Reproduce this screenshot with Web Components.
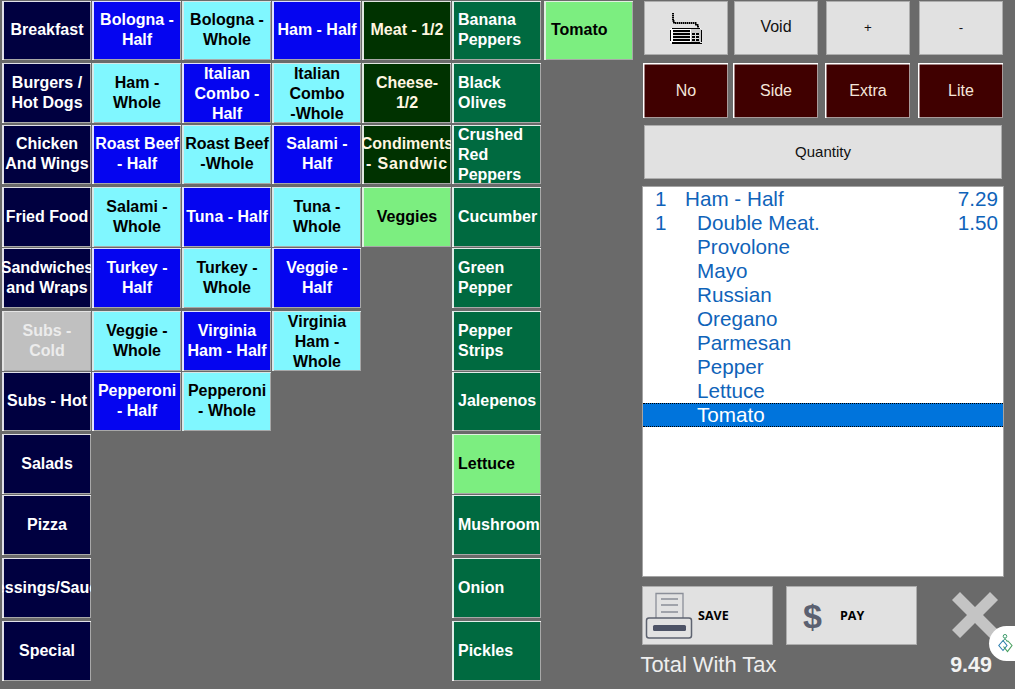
<!DOCTYPE html>
<html><head><meta charset="utf-8"><title>POS</title>
<style>
html,body{margin:0;padding:0;background:#6a6a6a;overflow:hidden}
body{font-family:"Liberation Sans",Arial,sans-serif}
</style></head><body>
<pos-app>
  <pos-menu>
    <pos-btn r="1" c="1" v="navy">Breakfast</pos-btn>
    <pos-btn r="2" c="1" v="navy">Burgers /<br>Hot Dogs</pos-btn>
    <pos-btn r="3" c="1" v="navy">Chicken<br>And Wings</pos-btn>
    <pos-btn r="4" c="1" v="navy">Fried Food</pos-btn>
    <pos-btn r="5" c="1" v="navy">Sandwiches<br>and Wraps</pos-btn>
    <pos-btn r="6" c="1" v="silver">Subs -<br>Cold</pos-btn>
    <pos-btn r="7" c="1" v="navy">Subs - Hot</pos-btn>
    <pos-btn r="8" c="1" v="navy">Salads</pos-btn>
    <pos-btn r="9" c="1" v="navy">Pizza</pos-btn>
    <pos-btn r="10" c="1" v="navy">Dressings/Sauces</pos-btn>
    <pos-btn r="11" c="1" v="navy">Special</pos-btn>

    <pos-btn r="1" c="2" v="blue">Bologna -<br>Half</pos-btn>
    <pos-btn r="2" c="2" v="cyan">Ham -<br>Whole</pos-btn>
    <pos-btn r="3" c="2" v="blue">Roast Beef<br>- Half</pos-btn>
    <pos-btn r="4" c="2" v="cyan">Salami -<br>Whole</pos-btn>
    <pos-btn r="5" c="2" v="blue">Turkey -<br>Half</pos-btn>
    <pos-btn r="6" c="2" v="cyan">Veggie -<br>Whole</pos-btn>
    <pos-btn r="7" c="2" v="blue">Pepperoni<br>- Half</pos-btn>

    <pos-btn r="1" c="3" v="cyan">Bologna -<br>Whole</pos-btn>
    <pos-btn r="2" c="3" v="blue" tall>Italian<br>Combo -<br>Half</pos-btn>
    <pos-btn r="3" c="3" v="cyan">Roast Beef<br>-Whole</pos-btn>
    <pos-btn r="4" c="3" v="blue">Tuna - Half</pos-btn>
    <pos-btn r="5" c="3" v="cyan">Turkey -<br>Whole</pos-btn>
    <pos-btn r="6" c="3" v="blue">Virginia<br>Ham - Half</pos-btn>
    <pos-btn r="7" c="3" v="cyan">Pepperoni<br>- Whole</pos-btn>

    <pos-btn r="1" c="4" v="blue">Ham - Half</pos-btn>
    <pos-btn r="2" c="4" v="cyan" tall>Italian<br>Combo<br>-Whole</pos-btn>
    <pos-btn r="3" c="4" v="blue">Salami -<br>Half</pos-btn>
    <pos-btn r="4" c="4" v="cyan">Tuna -<br>Whole</pos-btn>
    <pos-btn r="5" c="4" v="blue">Veggie -<br>Half</pos-btn>
    <pos-btn r="6" c="4" v="cyan" tall>Virginia<br>Ham -<br>Whole</pos-btn>

    <pos-btn r="1" c="5" v="forest">Meat - 1/2</pos-btn>
    <pos-btn r="2" c="5" v="forest">Cheese-<br>1/2</pos-btn>
    <pos-btn r="3" c="5" v="forest">Condiments<br><span style="letter-spacing:.8px">- Sandwic</span></pos-btn>
    <pos-btn r="4" c="5" v="lime">Veggies</pos-btn>

    <pos-btn r="1" c="6" v="green" left>Banana<br>Peppers</pos-btn>
    <pos-btn r="2" c="6" v="green" left>Black<br>Olives</pos-btn>
    <pos-btn r="3" c="6" v="green" left tall>Crushed<br>Red<br>Peppers</pos-btn>
    <pos-btn r="4" c="6" v="green" left>Cucumber</pos-btn>
    <pos-btn r="5" c="6" v="green" left>Green<br>Pepper</pos-btn>
    <pos-btn r="6" c="6" v="green" left>Pepper<br>Strips</pos-btn>
    <pos-btn r="7" c="6" v="green" left>Jalepenos</pos-btn>
    <pos-btn r="8" c="6" v="lime" left>Lettuce</pos-btn>
    <pos-btn r="9" c="6" v="green" left>Mushroom</pos-btn>
    <pos-btn r="10" c="6" v="green" left>Onion</pos-btn>
    <pos-btn r="11" c="6" v="green" left>Pickles</pos-btn>

    <pos-btn r="1" c="8" v="lime" left style="padding-left:7px">Tomato</pos-btn>
  </pos-menu>

  <order-panel>
    <tool-row style="--pad:2px">
      <tool-btn style="width:84px;--pb:0px">
        <svg width="34" height="33" viewBox="0 0 34 33" aria-hidden="true" shape-rendering="crispEdges" style="display:block">
          <path d="M4 1v8h1v2h22v2h2v3" fill="none" stroke="#777" stroke-width="2"/>
          <path d="M4 1v8h1v2h22v2h2v3" fill="none" stroke="#000" stroke-width="2" stroke-dasharray="1 1"/>
          <rect x="1" y="16" width="31" height="15" rx="2" fill="#fff"/>
          <path d="M3 16h28v1H3zM3 30h28v1H3zM1 18h1v11H1zM32 18h1v12h-1zM3 31h30v1H3z" fill="#000"/>
          <rect x="22" y="17" width="10" height="13" fill="#c8c8c8"/>
          <rect x="4" y="18" width="17" height="11" fill="#000"/>
          <path d="M4 20h17v1H4zM4 23h17v1H4zM4 26h17v1H4z" fill="#ddd"/>
          <rect x="23" y="21" width="7" height="8" fill="#000"/>
          <path d="M23 23h7v1h-7zM23 26h7v1h-7zM26 21h1v8h-1z" fill="#ddd"/>
        </svg>
      </tool-btn>
      <tool-btn style="width:84px;margin-left:6px;--fs:16px">Void</tool-btn>
      <tool-btn style="width:84px;margin-left:8px;--pb:1px">+</tool-btn>
      <tool-btn style="width:84px;margin-left:9px;--pb:1px">-</tool-btn>
    </tool-row>
    <tool-row style="--pad:1px;margin-top:8px;--h:55px">
      <tool-btn dark style="width:85px">No</tool-btn>
      <tool-btn dark style="width:85px;margin-left:5px">Side</tool-btn>
      <tool-btn dark style="width:85px;margin-left:7px">Extra</tool-btn>
      <tool-btn dark style="width:85px;margin-left:8px">Lite</tool-btn>
    </tool-row>
    <tool-row style="--pad:2px;margin-top:7px">
      <tool-btn style="width:358px;--fs:15px;--pb:1px">Quantity</tool-btn>
    </tool-row>
    <order-list>
      <order-row qty="1" price="7.29">Ham - Half</order-row>
      <order-row mod qty="1" price="1.50">Double Meat.</order-row>
      <order-row mod>Provolone</order-row>
      <order-row mod>Mayo</order-row>
      <order-row mod>Russian</order-row>
      <order-row mod>Oregano</order-row>
      <order-row mod>Parmesan</order-row>
      <order-row mod>Pepper</order-row>
      <order-row mod>Lettuce</order-row>
      <order-row mod selected>Tomato</order-row>
    </order-list>
    <action-row>
      <action-btn label="SAVE" gap="5">
        <svg width="48" height="47" viewBox="0 0 48 47" aria-hidden="true" style="display:block">
          <path d="M11 26V1.500h27V26" fill="#e2e2e2" stroke="#8b8f99" stroke-width="1.300"/>
          <path d="M16 7h17M16 13h17M16 20h17" stroke="#8a8e98" stroke-width="1.300" fill="none"/>
          <rect x="1.500" y="26" width="45" height="20" rx="2.500" fill="#e2e2e2" stroke="#5e6370" stroke-width="1.500"/>
          <rect x="8" y="33" width="33" height="6" rx="1.500" fill="#4d5366"/>
        </svg>
      </action-btn>
      <action-btn label="PAY" style="margin-left:13px" pad="16" gap="18"><span style="font:bold 34px/1 'Liberation Sans',Arial,sans-serif;color:#5b6070;width:19px;display:block">$</span></action-btn>
      <close-icon></close-icon>
    </action-row>
    <total-row label="Total With Tax" value="9.49"></total-row>
  </order-panel>
  <float-badge></float-badge>
</pos-app>
<script>
function def(name, css, html, extra){
  class C extends HTMLElement{
    constructor(){super();const s=this.attachShadow({mode:'open'});s.innerHTML='<style>'+css+'</style>'+(typeof html==='function'?'':html);}
    connectedCallback(){ if(typeof html==='function'){const st=this.shadowRoot.querySelector('style');this.shadowRoot.innerHTML='';this.shadowRoot.append(st);const t=document.createElement('template');t.innerHTML=html(this);this.shadowRoot.append(t.content);} if(extra)extra(this);}
  }
  customElements.define(name,C);
}
def('pos-app',':host{display:flex;width:1015px;height:689px;position:relative;overflow:hidden;background:#6a6a6a;font-family:"Liberation Sans",Arial,sans-serif}','<slot></slot>');
def('pos-menu',`:host{display:grid;box-sizing:border-box;width:642px;height:689px;flex:none;padding:1px 0 0 2px;
  grid-template-columns:repeat(6,89px) 1px 89px;column-gap:1px;
  grid-template-rows:59px 3px 60px 2px 59px 3px 60px 1px 60px 3px 60px 1px 59px 3px 60px 1px 60px 3px 60px 3px 60px;align-content:start;justify-content:start}`,'<slot></slot>');
def('pos-btn',`:host{display:flex;align-items:center;justify-content:center;overflow:hidden;text-align:center;
  font:bold 16px/20px "Liberation Sans",Arial,sans-serif;white-space:nowrap;background:var(--bg);color:var(--fg);padding:0 0 1px 1px;box-sizing:border-box;
  box-shadow:inset 2px 1px 0 var(--hi,rgba(255,255,255,.88)),inset -1px -1px 0 var(--lo,#a8a8a8)}
  :host([v=navy]){--bg:#000040;--fg:#fff}
  :host([v=blue]){--bg:#0505f0;--fg:#fff}
  :host([v=cyan]){--bg:#80f7ff;--fg:#000;--hi:#d8e8e8}
  :host([v=forest]){--bg:#003200;--fg:#fff6e0}
  :host([v=green]){--bg:#006a40;--fg:#fff}
  :host([v=lime]){--bg:#7cee80;--fg:#000;--hi:#e0f0e0}
  :host([v=silver]){--bg:#c0c0c0;--fg:#ececec;--hi:#e4e4e4}
  :host([left]){justify-content:flex-start;text-align:left;padding-left:6px}
  :host([tall]){padding-top:1px;padding-bottom:0}
  span{display:block;flex:none}`,'<span><slot></slot></span>',el=>{
    el.style.gridRow=String(2*(+el.getAttribute('r'))-1);
    el.style.gridColumn=el.getAttribute('c');
  });
def('order-panel',':host{display:flex;flex-direction:column;width:362px;padding-top:1px;flex:none}','<slot></slot>');
def('tool-row',':host{display:flex;padding-left:var(--pad,0);height:var(--h,54px);flex:none}','<slot></slot>');
def('tool-btn',`:host{display:flex;align-items:center;justify-content:center;box-sizing:border-box;flex:none;padding-bottom:var(--pb,3px);
  background:#e1e1e1;color:#111;border:1px solid #adadad;font:var(--fs,13.33px) "Liberation Sans",Arial,sans-serif}
  :host([dark]){background:#400000;color:#f5e6da;font-size:16px;border:0;padding:1px 0 0 1px;box-shadow:inset 1.5px 1.5px 0 #fff,inset -1px -1px 0 #a89a9a}`,'<slot></slot>');
def('order-list',`:host{display:block;box-sizing:border-box;height:391px;margin-top:7px;background:#fff;border:1px solid #a4a4a4;flex:none}`,'<slot></slot>');
def('order-row',`:host{display:flex;height:24px;box-sizing:border-box;padding-left:12px;color:#0f63b9;font:20.67px/24px "Liberation Sans",Arial,sans-serif;white-space:nowrap}
  .q{width:30px;flex:none}.n{flex:1}.p{padding-right:5px}
  :host([mod]) .n{padding-left:12px}
  :host([selected]){background:#0074dc;color:#fff;border-top:1px dotted #000;border-bottom:1px dotted #000;line-height:22px}`,
  el=>`<span class="q">${el.getAttribute('qty')||''}</span><span class="n"><slot></slot></span><span class="p">${el.getAttribute('price')||''}</span>`);
def('action-row',':host{display:flex;height:59px;margin-top:9px;flex:none}','<slot></slot>');
def('action-btn',`:host{display:flex;align-items:center;box-sizing:border-box;width:131px;height:59px;flex:none;background:#e1e1e1;border:1px solid #adadad;color:#000}
  .l{font:bold 12.5px "Open Sans",Arial,sans-serif}`,
  el=>`<slot style="display:block;margin-left:${el.getAttribute('pad')||2}px"></slot><span class="l" style="margin-left:${el.getAttribute('gap')}px">${el.getAttribute('label')}</span>`);
def('close-icon',':host{display:block;width:46px;height:46px;margin:6px 0 0 35px;flex:none}',
 '<svg width="46" height="46" viewBox="0 0 46 46" style="display:block"><path d="M8 0L23 15L38 0L46 8L31 23L46 38L38 46L23 31L8 46L0 38L15 23L0 8Z" fill="#c4c4c4"/></svg>');
def('total-row',`:host{display:flex;justify-content:space-between;align-items:center;height:30px;margin-top:5px;padding:0 12px 0 0;margin-left:-1.5px;color:#eee;font:22px "Liberation Sans",Arial,sans-serif}
  b{font-size:21.5px;color:#f2f2f2}
  span{font-size:21.9px}`,
  el=>`<span>${el.getAttribute('label')}</span><b>${el.getAttribute('value')}</b>`);
def('float-badge',`:host{position:absolute;left:989px;top:626px;width:30px;height:35px;background:#fff;border-radius:18px 0 0 18px;display:flex;align-items:center;padding-left:9px;box-sizing:border-box}`,
 `<svg width="15" height="19" viewBox="0 0 15 19" fill="none" style="display:block"><circle cx="7" cy="2.300" r="1.800" stroke="#3c9a6a" stroke-width="1"/><path d="M4.500 8L7 4.500 9.500 8" stroke="#3c9a6a" stroke-width="1"/><path d="M5 6.500L.8 11.500 5 16.500 9 11.500z" stroke="#2f7fb0" stroke-width="1.100"/><path d="M9.500 6.500L14 11.500 9.500 17.500 5.500 12.500" stroke="#4aa05f" stroke-width="1.100"/></svg>`);
</script>
</body></html>
